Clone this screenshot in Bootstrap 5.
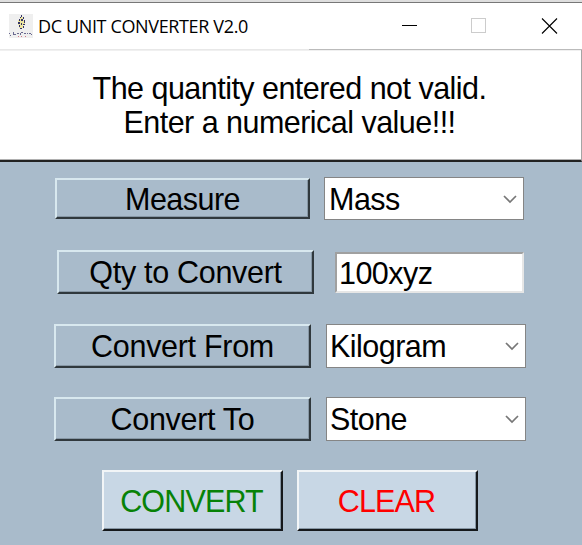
<!DOCTYPE html>
<html lang="en">
<head>
<meta charset="utf-8">
<title>DC UNIT CONVERTER V2.0</title>
<link href="https://cdn.jsdelivr.net/npm/bootstrap@5.3.0/dist/css/bootstrap.min.css" rel="stylesheet">
<style>
body{width:582px;height:545px;overflow:hidden;background:#a9bbcb;color:#000;font:30.5px/34px "Liberation Sans",Arial,sans-serif;letter-spacing:-.53px}
.titlebar{border-top:1px solid #777;border-bottom:1px solid #e8e8e8;height:48px}
.topstrip{height:2px;background:#dedede}
.app-icon{margin-top:-1px}
.caption{font:18px/24px "Open Sans","Noto Sans",sans-serif;letter-spacing:-.36px;margin-left:5px;white-space:nowrap}
.edge{height:1px;width:273px;margin:-1px 0 0 309px;background:#bbb}
.message{height:112px;border-right:1px solid #a5a5a5;border-bottom:2px solid #222;box-shadow:inset 0 -1px #b0b0b0,inset 0 1px #f0f0f0;padding:21px 2px 0 0}
.tile{border:solid;border-width:2px;border-color:#d8e8ef #30383d #30383d #d8e8ef;border-radius:0;padding:0;display:flex;align-items:center;justify-content:center;box-shadow:inset -1px -1px #8797a5;white-space:nowrap;letter-spacing:inherit}
.field{border:1px solid #858585;border-radius:0;background:#fff;color:#000;height:43px;width:200px;padding:0 6px 0 4px;white-space:nowrap}
.entry{width:189px;height:41px;border:2px solid;border-color:#a0a0a0 #e6e6e6 #e6e6e6 #a0a0a0;padding-left:2px}
.converter{padding-left:54px}
.r1{padding:15px 0 0 1px}.r1 .tile{width:255px;height:41px;margin-top:1px}.r1 .field{margin-left:14px}
.r2{padding:30px 0 0 3px}.r2 .tile{width:257px;height:44px}.r2 .field{margin:2px 0 0 21px}
.r3{padding-top:30px}.r4{padding-top:29px}
.r3 .tile,.r4 .tile{width:257px;height:44px}.r3 .field,.r4 .field{margin-left:15px;height:44px}
.r3 .field,.r4 .field{padding-left:3px}
.actions{padding:29px 0 0 48px;gap:14px}
.actions .tile{width:181px;height:61px;background:#c8d7e5;border-color:#f2f5f7 #15181b #15181b #f2f5f7;padding-right:2px;letter-spacing:-.85px}
.go{color:#078207}.wipe{color:#f00}
.tile.fit-b{letter-spacing:-.3px}
</style>
<script src="https://cdn.jsdelivr.net/npm/bootstrap@5.3.0/dist/js/bootstrap.bundle.min.js"></script>
</head>
<body>
<div class="topstrip"></div>
<header class="titlebar bg-white d-flex align-items-center">
<svg class="app-icon ms-2 flex-shrink-0" width="25" height="24" viewBox="0 0 25 24" shape-rendering="crispEdges"><path fill="#efefef" d="M1 0h24v24H1z"/><path fill="#eee6a0" d="M12 3h3v3h2v5h-2v3h-4v-3h-1V6h2z"/><path fill="#343465" d="M13 1h1v2h-1zM12 3h1v1h-1zM15 3h1v2h-1zM11 5h1v2h-1zM13 5h2v2h-2zM16 6h1v3h-1zM10 8h2v2h-2zM13 9h1v2h-1zM15 10h2v1h-2zM11 11h1v2h-1zM15 12h1v2h-1zM12 14h2v1h-2z"/><path fill="#6a6a90" d="M5 18h1v2h2v1H5zM9 19h2v1H9zM13 18h2v1h-2zM12 19h1v2h-1zM16 19h2v1h-2zM19 19h1v1h-1zM21 19h2v1h-2zM1 19h1v1H1zM2 21h1v1H2zM23 20h1v1h-1z"/><path fill="#d17585" d="M10 22h1v1h-1zM13 22h1v1h-1zM17 22h1v1h-1z"/></svg>
<span class="caption">DC UNIT CONVERTER V2.0</span>
<svg class="ms-auto" width="182" height="46" fill="none" shape-rendering="crispEdges"><path stroke="#000" d="M2 22.5h15"/><path stroke="#ccc" d="M71.500 15.500h14v14h-14z"/><path stroke="#000" shape-rendering="auto" stroke-width="1.1" d="M142 15.500l15 15M157 15.500l-15 15"/></svg>
</header>
<div class="edge"></div>
<div class="message bg-white text-center"><div>The quantity entered not valid.</div><div>Enter a numerical value!!!</div></div>
<main class="converter">
<div class="r1 d-flex"><div class="tile">Measure</div><div class="field d-flex align-items-center justify-content-between"><span>Mass</span><svg width="14" height="10" fill="none" stroke="#777" stroke-width="1.7"><path d="M1 2l6 6 6-6"/></svg></div></div>
<div class="r2 d-flex"><div class="tile fit-b">Qty to Convert</div><div class="field entry d-flex align-items-center">100xyz</div></div>
<div class="r3 d-flex"><div class="tile fit-b">Convert From</div><div class="field d-flex align-items-center justify-content-between"><span>Kilogram</span><svg width="14" height="10" fill="none" stroke="#777" stroke-width="1.7"><path d="M1 2l6 6 6-6"/></svg></div></div>
<div class="r4 d-flex"><div class="tile fit-b">Convert To</div><div class="field d-flex align-items-center justify-content-between"><span>Stone</span><svg width="14" height="10" fill="none" stroke="#777" stroke-width="1.7"><path d="M1 2l6 6 6-6"/></svg></div></div>
<div class="actions d-flex"><button class="tile go">CONVERT</button><button class="tile wipe">CLEAR</button></div>
</main>
</body>
</html>
